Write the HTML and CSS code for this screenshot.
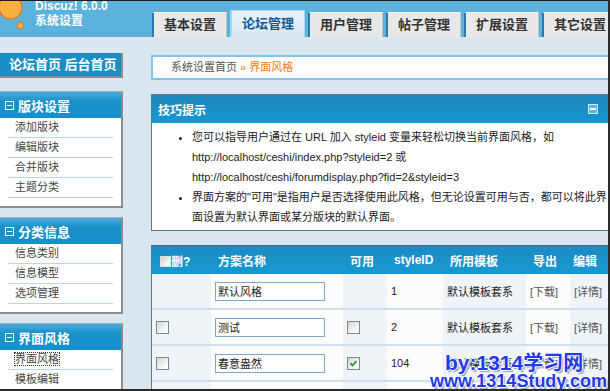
FILE: index.html
```html
<!DOCTYPE html>
<html>
<head>
    <meta charset="utf-8">
    <title>Discuz! 6.0.0 系统设置 - 界面风格</title>
    <link rel="stylesheet" href="styles.css">
</head>
<body>
<div class="frame">
    <div class="topbar">
        <div class="brand">
            <svg class="logo" width="35" height="30" viewBox="0 0 35 30">
                <ellipse cx="10.5" cy="6" rx="11.5" ry="12" fill="#fbb040" stroke="#e6772b" stroke-width="1.4"/>
                <circle cx="20.5" cy="24.5" r="3.2" fill="#fbb040" stroke="#e6772b" stroke-width="1.2"/>
            </svg>
            <div class="brand-text">Discuz! 6.0.0<br>系统设置</div>
        </div>
        <ul class="tabs">
            <li>基本设置</li>
            <li class="active">论坛管理</li>
            <li>用户管理</li>
            <li>帖子管理</li>
            <li>扩展设置</li>
            <li>其它设置</li>
        </ul>
    </div>

    <div class="page">
        <div class="sidebar">
            <div class="home-links">论坛首页&nbsp;后台首页</div>

            <div class="menu">
                <div class="menu-title"><span class="fold"></span>版块设置</div>
                <ul>
                    <li>添加版块</li>
                    <li>编辑版块</li>
                    <li>合并版块</li>
                    <li>主题分类</li>
                </ul>
            </div>

            <div class="menu">
                <div class="menu-title"><span class="fold"></span>分类信息</div>
                <ul>
                    <li>信息类别</li>
                    <li>信息模型</li>
                    <li>选项管理</li>
                </ul>
            </div>

            <div class="menu">
                <div class="menu-title"><span class="fold"></span>界面风格</div>
                <ul>
                    <li><span class="focus">界面风格</span></li>
                    <li>模板编辑</li>
                </ul>
            </div>
        </div>

        <div class="main">
            <div class="crumb">系统设置首页 <span class="here">» 界面风格</span></div>

            <div class="panel">
                <div class="panel-title">技巧提示<span class="collapse"></span></div>
                <ul class="tip-list">
                    <li>您可以指导用户通过在 URL 加入 styleid 变量来轻松切换当前界面风格，如<br>http://localhost/ceshi/index.php?styleid=2 或<br>http://localhost/ceshi/forumdisplay.php?fid=2&amp;styleid=3</li>
                    <li>界面方案的"可用"是指用户是否选择使用此风格，但无论设置可用与否，都可以将此界<br>面设置为默认界面或某分版块的默认界面。</li>
                </ul>
            </div>

            <table class="styles">
                <colgroup>
                    <col style="width: 59px">
                    <col style="width: 132px">
                    <col style="width: 44px">
                    <col style="width: 56px">
                    <col style="width: 83px">
                    <col style="width: 44px">
                    <col style="width: 43px">
                </colgroup>
                <thead>
                    <tr>
                        <th><span class="cb small"></span>删?</th>
                        <th>方案名称</th>
                        <th>可用</th>
                        <th>styleID</th>
                        <th>所用模板</th>
                        <th>导出</th>
                        <th class="last">编辑</th>
                    </tr>
                </thead>
                <tbody>
                    <tr>
                        <td></td>
                        <td><input class="name" type="text" value="默认风格"></td>
                        <td></td>
                        <td>1</td>
                        <td>默认模板套系</td>
                        <td class="link">[下载]</td>
                        <td class="link">[详情]</td>
                    </tr>
                    <tr>
                        <td><span class="cb"></span></td>
                        <td><input class="name" type="text" value="测试"></td>
                        <td><span class="cb"></span></td>
                        <td>2</td>
                        <td>默认模板套系</td>
                        <td class="link">[下载]</td>
                        <td class="link">[详情]</td>
                    </tr>
                    <tr>
                        <td><span class="cb"></span></td>
                        <td><input class="name" type="text" value="春意盎然"></td>
                        <td><span class="cb"><svg width="9" height="9" viewBox="0 0 9 9"><path d="M1.5 4.3 L3.6 6.5 L7.6 2" fill="none" stroke="#1f9a1f" stroke-width="1.8"/></svg></span></td>
                        <td>104</td>
                        <td>默认模板套系</td>
                        <td class="link">[下载]</td>
                        <td class="link">[详情]</td>
                    </tr>
                    <tr>
                        <td></td>
                        <td></td>
                        <td></td>
                        <td></td>
                        <td></td>
                        <td></td>
                        <td></td>
                    </tr>
                </tbody>
            </table>
        </div>
    </div>

    <div class="watermark">
        <div class="by">by:1314<span class="cn">学习网</span></div>
        <div class="site">www.1314Study.com</div>
    </div>
</div>
</body>
</html>
```

FILE: styles.css
```css
html, body {
    margin: 0;
    overflow: hidden;
}

body {
    font-family: "Liberation Sans", "Noto Sans CJK SC", sans-serif;
    font-size: 11px;
    color: #333;
}

ul {
    margin: 0;
    padding: 0;
    list-style: none;
}

.frame {
    position: relative;
    width: 610px;
    height: 391px;
    box-sizing: border-box;
    border-top: 1px solid #1d1d1d;
    border-right: 2px solid #2b2b2b;
    border-bottom: 2px solid #2b2b2b;
    background: #dbe7f0;
    overflow: hidden;
}

/* top bar */
.topbar {
    display: flex;
    height: 36px;
    background: #5bb3dd;
}

.brand {
    flex: 0 0 152px;
    display: flex;
    overflow: hidden;
}

.logo {
    flex: 0 0 35px;
}

.brand-text {
    margin-top: -2px;
    color: #fff;
    font-size: 12px;
    font-weight: bold;
    line-height: 15px;
}

.tabs {
    display: flex;
    align-items: flex-end;
    gap: 3px;
}

.tabs li {
    flex: 0 0 75px;
    box-sizing: border-box;
    height: 25px;
    line-height: 23px;
    text-align: center;
    font-size: 13px;
    font-weight: bold;
    color: #333;
    background: #e8e8e8;
    border-top: 1px solid #f6f6f6;
    border-left: 2px solid #2a7aae;
    border-right: 1px solid #c4c4c4;
}

.tabs li.active {
    height: 27px;
    line-height: 25px;
    color: #135c96;
    background: linear-gradient(#e8f3fa, #dbe7f0);
    border-top-color: #a9d5ef;
    border-left-color: #a9d5ef;
    border-right-color: #a9d5ef;
}

/* layout */
.page {
    display: flex;
    gap: 28px;
}

.sidebar {
    flex: 0 0 123px;
    margin-top: 16px;
}

.main {
    flex: 0 0 462px;
    margin-top: 18px;
}

/* sidebar */
.home-links {
    height: 23px;
    line-height: 23px;
    padding-left: 9px;
    background: #1b8dc5;
    color: #fff;
    font-size: 13px;
    font-weight: bold;
    border-right: 2px solid #8d8d8d;
    border-bottom: 2px solid #8d8d8d;
}

.menu {
    margin-top: 13px;
    background: #fff;
    border-top: 1px solid #9fb0bb;
    border-right: 2px solid #8d8d8d;
    border-bottom: 2px solid #8d8d8d;
}

.menu + .menu {
    margin-top: 9px;
}

.menu-title {
    display: flex;
    align-items: center;
    height: 26px;
    padding-left: 5px;
    background: linear-gradient(#4aaedd, #1a91c9 35%, #1390cb);
    color: #fff;
    font-size: 13px;
    font-weight: bold;
}

.fold {
    position: relative;
    width: 7px;
    height: 7px;
    margin-right: 4px;
    border: 1px solid #fff;
}

.fold::after {
    content: "";
    position: absolute;
    left: 1px;
    top: 3px;
    width: 5px;
    height: 1px;
    background: #fff;
}

.menu ul {
    padding-bottom: 8px;
}

.menu li {
    height: 19px;
    line-height: 19px;
    margin: 0 8px;
    padding-left: 7px;
    border-bottom: 1px solid #b9d5e9;
    color: #444;
}

.focus {
    outline: 1px dotted #333;
}

/* breadcrumb */
.crumb {
    height: 21px;
    line-height: 21px;
    padding-left: 18px;
    border: 2px solid #82c4e6;
    background: #fdfefb;
    color: #555;
}

.crumb .here {
    color: #f27d17;
}

/* tips */
.panel {
    margin-top: 14px;
    background: #fff;
    border: 1px solid #5e7b8b;
}

.panel-title {
    display: flex;
    justify-content: space-between;
    align-items: center;
    height: 28px;
    padding: 0 14px 0 6px;
    background: linear-gradient(#1f86bc, #1597d0);
    color: #fff;
    font-size: 12px;
    font-weight: bold;
}

.collapse {
    position: relative;
    width: 8px;
    height: 8px;
    border: 1px solid #cdeeff;
    background: #54b9e6;
}

.collapse::after {
    content: "";
    position: absolute;
    left: 1px;
    top: 3px;
    width: 6px;
    height: 2px;
    background: #fff;
}

.tip-list {
    padding: 4px 0 3px 40px;
    list-style: disc;
    line-height: 20px;
    color: #222;
}

/* styles table */
.styles {
    margin-top: 14px;
    width: 462px;
    table-layout: fixed;
    border-collapse: separate;
    border-spacing: 0;
    border-left: 1px solid #5e7b8b;
    border-top: 1px solid #4f6d7c;
}

.styles th {
    height: 28px;
    padding: 0 0 0 7px;
    text-align: left;
    background: linear-gradient(#1d8bc3, #1699d2);
    color: #fff;
    font-size: 12px;
    font-weight: bold;
    white-space: nowrap;
}

.styles th:first-child {
    padding-left: 8px;
}

.styles th.last {
    padding-left: 3px;
}

.styles td {
    height: 34px;
    padding: 0 0 0 4px;
    border-bottom: 2px solid #cfe1ee;
    background: #fcfdfb;
    color: #222;
    white-space: nowrap;
}

.styles td:nth-child(odd) {
    background: #eef4f8;
}

.styles td.link {
    color: #555;
}

.cb {
    display: inline-flex;
    align-items: center;
    justify-content: center;
    width: 11px;
    height: 11px;
    vertical-align: middle;
    border: 1px solid #7b8a99;
    background: linear-gradient(135deg, #d6d6ce, #fbfbfb 75%);
}

.cb.small {
    width: 9px;
    height: 9px;
    margin-top: -2px;
    border-color: #d8e4ec;
    background: linear-gradient(135deg, #d0d0c8, #f8f8f8 75%);
}

.name {
    width: 110px;
    height: 19px;
    box-sizing: border-box;
    margin: 0;
    padding: 0 2px;
    border: 1px solid #7ea9cb;
    background: #fff;
    font-family: "Liberation Sans", "Noto Sans CJK SC", sans-serif;
    font-size: 11px;
    color: #222;
    vertical-align: middle;
}

/* watermark overlay */
.watermark {
    position: absolute;
    left: 430px;
    top: 352px;
    font-weight: bold;
    color: #2439e8;
    text-shadow: 1px 0 0 #fff, -1px 0 0 #fff, 0 1px 0 #fff, 0 -1px 0 #fff, 2px 2px 1px #9aa3c0;
    white-space: nowrap;
}

.watermark .by {
    height: 19px;
    line-height: 19px;
    padding-left: 15px;
    font-size: 21px;
}

.watermark .cn {
    font-size: 20px;
}

.watermark .site {
    height: 19px;
    line-height: 19px;
    font-size: 18px;
}
```
